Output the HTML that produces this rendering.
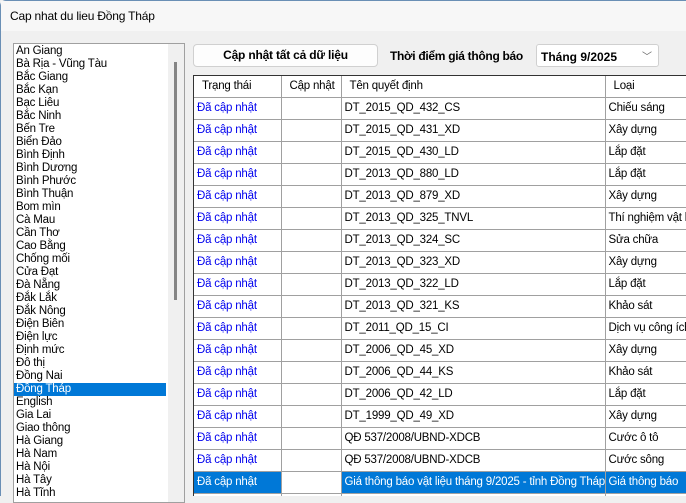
<!DOCTYPE html>
<html><head><meta charset="utf-8"><style>
*{margin:0;padding:0;box-sizing:border-box}
body{width:686px;height:496px;overflow:hidden;background:#f0f0f0;font-family:"Liberation Sans",sans-serif;font-size:12px;color:#000;position:relative}
.frame{position:absolute;left:0;top:0;width:686px;height:496px;border-left:1px solid #6a8fb5;border-top:1px solid #6a8fb5;border-top-left-radius:6px}
.title{position:absolute;left:1px;top:1px;width:685px;height:30px;background:#f7f7f7;padding:8px 0 0 9px;font-size:12px;letter-spacing:-0.2px}
.list{position:absolute;left:13px;top:43px;width:172px;height:460px;background:#fff;border:1px solid #a0a0a0;overflow:hidden;padding-top:1px}
.it{height:13px;line-height:13px;padding-left:2px;font-size:11.5px;letter-spacing:-0.2px;white-space:nowrap;width:152px}
.it.sel{background:#0078d7;color:#fff}
.sb{position:absolute;left:154px;top:0;width:16px;height:100%;background:#f0f0f0}
.thumb{position:absolute;left:6px;top:18px;width:3px;height:238px;background:#858585}
.btn{position:absolute;left:193px;top:44px;width:185px;height:23px;background:#fdfdfd;border:1px solid #d0d0d0;border-radius:4px;text-align:center;line-height:21px;font-weight:bold;font-size:12px;letter-spacing:-0.2px}
.lbl{position:absolute;left:390px;top:49px;font-weight:bold;font-size:12px;letter-spacing:-0.3px}
.combo{position:absolute;left:536px;top:44px;width:123px;height:23px;background:#fff;border:1px solid #d0d0d0;border-radius:3px;padding:5px 0 0 4px;font-weight:bold;font-size:12px}
.combo span{position:absolute;right:6px;top:3px;color:#666;font-weight:normal;font-size:10px}
.grid{position:absolute;left:193px;top:75px;width:493px;height:421px;background:#fff;border-left:1px solid #333;border-top:1px solid #333;overflow:hidden}
table{border-collapse:collapse;table-layout:fixed;width:500px}
td{height:22px;border-right:1px solid #a0a0a0;border-bottom:1px solid #a0a0a0;padding:0 3px;white-space:nowrap;overflow:hidden;font-size:11.5px;letter-spacing:-0.2px}
td.b{color:#0000ee}
tr.h td{padding-left:8px;height:21px}
tr.s td{background:#0078d7;color:#fff}
tr.s td.w{background:#fff}
</style></head><body>
<div class="frame"></div>
<div class="title">Cap nhat du lieu Đồng Tháp</div>
<div class="list">
<div class="it">An Giang</div><div class="it">Bà Rịa - Vũng Tàu</div><div class="it">Bắc Giang</div><div class="it">Bắc Kạn</div><div class="it">Bạc Liêu</div><div class="it">Bắc Ninh</div><div class="it">Bến Tre</div><div class="it">Biển Đảo</div><div class="it">Bình Định</div><div class="it">Bình Dương</div><div class="it">Bình Phước</div><div class="it">Bình Thuận</div><div class="it">Bom mìn</div><div class="it">Cà Mau</div><div class="it">Cần Thơ</div><div class="it">Cao Bằng</div><div class="it">Chống mối</div><div class="it">Cửa Đạt</div><div class="it">Đà Nẵng</div><div class="it">Đắk Lắk</div><div class="it">Đắk Nông</div><div class="it">Điện Biên</div><div class="it">Điện lực</div><div class="it">Định mức</div><div class="it">Đô thị</div><div class="it">Đồng Nai</div><div class="it sel">Đồng Tháp</div><div class="it">English</div><div class="it">Gia Lai</div><div class="it">Giao thông</div><div class="it">Hà Giang</div><div class="it">Hà Nam</div><div class="it">Hà Nội</div><div class="it">Hà Tây</div><div class="it">Hà Tĩnh</div>
<div class="sb"><div class="thumb"></div></div>
</div>
<div class="btn">Cập nhật tất cả dữ liệu</div>
<div class="lbl">Thời điểm giá thông báo</div>
<div class="combo">Tháng 9/2025<span>﹀</span></div>
<div class="grid"><table>
<colgroup><col style="width:87px"><col style="width:60px"><col style="width:264px"><col style="width:89px"></colgroup>
<tr class="h"><td>Trạng thái</td><td>Cập nhật</td><td>Tên quyết định</td><td>Loại</td></tr>
<tr><td class="b">Đã cập nhật</td><td></td><td>DT_2015_QD_432_CS</td><td>Chiếu sáng</td></tr>
<tr><td class="b">Đã cập nhật</td><td></td><td>DT_2015_QD_431_XD</td><td>Xây dựng</td></tr>
<tr><td class="b">Đã cập nhật</td><td></td><td>DT_2015_QD_430_LD</td><td>Lắp đặt</td></tr>
<tr><td class="b">Đã cập nhật</td><td></td><td>DT_2013_QD_880_LD</td><td>Lắp đặt</td></tr>
<tr><td class="b">Đã cập nhật</td><td></td><td>DT_2013_QD_879_XD</td><td>Xây dựng</td></tr>
<tr><td class="b">Đã cập nhật</td><td></td><td>DT_2013_QD_325_TNVL</td><td>Thí nghiệm vật liệu</td></tr>
<tr><td class="b">Đã cập nhật</td><td></td><td>DT_2013_QD_324_SC</td><td>Sửa chữa</td></tr>
<tr><td class="b">Đã cập nhật</td><td></td><td>DT_2013_QD_323_XD</td><td>Xây dựng</td></tr>
<tr><td class="b">Đã cập nhật</td><td></td><td>DT_2013_QD_322_LD</td><td>Lắp đặt</td></tr>
<tr><td class="b">Đã cập nhật</td><td></td><td>DT_2013_QD_321_KS</td><td>Khảo sát</td></tr>
<tr><td class="b">Đã cập nhật</td><td></td><td>DT_2011_QD_15_CI</td><td>Dịch vụ công ích</td></tr>
<tr><td class="b">Đã cập nhật</td><td></td><td>DT_2006_QD_45_XD</td><td>Xây dựng</td></tr>
<tr><td class="b">Đã cập nhật</td><td></td><td>DT_2006_QD_44_KS</td><td>Khảo sát</td></tr>
<tr><td class="b">Đã cập nhật</td><td></td><td>DT_2006_QD_42_LD</td><td>Lắp đặt</td></tr>
<tr><td class="b">Đã cập nhật</td><td></td><td>DT_1999_QD_49_XD</td><td>Xây dựng</td></tr>
<tr><td class="b">Đã cập nhật</td><td></td><td>QĐ 537/2008/UBND-XDCB</td><td>Cước ô tô</td></tr>
<tr><td class="b">Đã cập nhật</td><td></td><td>QĐ 537/2008/UBND-XDCB</td><td>Cước sông</td></tr>
<tr class="s"><td>Đã cập nhật</td><td class="w"></td><td>Giá thông báo vật liệu tháng 9/2025 - tỉnh Đồng Tháp</td><td>Giá thông báo</td></tr>
<tr><td></td><td></td><td></td><td></td></tr>
</table></div>
</body></html>
